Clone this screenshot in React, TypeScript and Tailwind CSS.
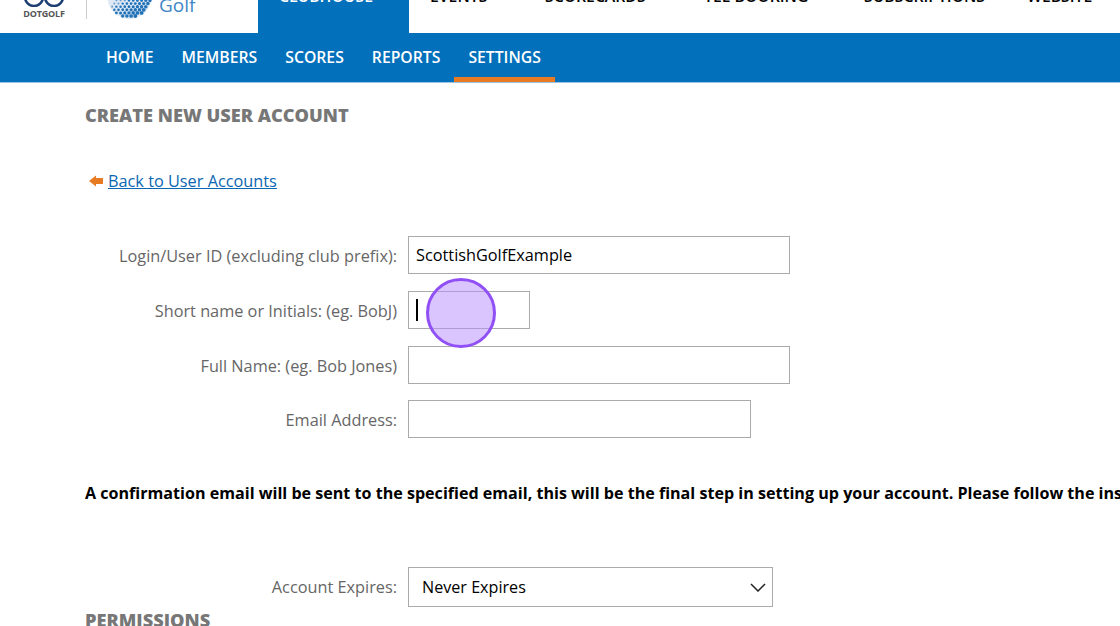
const TOP_LINKS = [
  { label: 'EVENTS', width: 'w-[115px]' },
  { label: 'SCORECARDS', width: 'w-[159px]' },
  { label: 'TEE BOOKING', width: 'w-[160px]' },
  { label: 'SUBSCRIPTIONS', width: 'w-[163px]' },
  { label: 'WEBSITE', width: 'w-[70px]' },
];

const SUB_LINKS = ['HOME', 'MEMBERS', 'SCORES', 'REPORTS', 'SETTINGS'];

function DotGolfLogo() {
  return (
    <div className="flex w-[44px] flex-col items-center">
      <svg width="44" height="7" viewBox="0 0 44 7" fill="none" stroke="#1d3f73" strokeWidth="2.6">
        <circle cx="12" cy="-3" r="9" />
        <circle cx="32" cy="-3" r="9" />
      </svg>
      <span className="mt-[2px] text-[9px] leading-[10px] font-bold tracking-[-0.2px] text-[#555]">DOTGOLF</span>
    </div>
  );
}

function GolfBall() {
  const dots: { x: number; y: number; r: number; o: number }[] = [];
  for (let row = 0; row < 7; row++) {
    for (let col = 0; col < 11; col++) {
      const x = 1 + col * 4.2 + (row % 2) * 2.1;
      const y = 0.5 + row * 3.1;
      const inBall = (x - 22.5) ** 2 + (y + 3) ** 2 < 21 * 21;
      if (!inBall) continue;
      const weight = (x + y * 1.8) / 50;
      if (weight < 0.2) continue;
      dots.push({ x, y, r: 0.7 + weight * 1.1, o: weight < 0.4 ? 0.6 : 1 });
    }
  }
  return (
    <svg width="46" height="20" viewBox="0 0 46 20" className="shrink-0">
      <circle cx="22.5" cy="-3" r="22" fill="#dfe9f5" />
      {dots.map((d) => (
        <circle key={`${d.x}-${d.y}`} cx={d.x} cy={d.y} r={d.r} fill="#2272b8" opacity={d.o} />
      ))}
    </svg>
  );
}

function FormRow({ label, inputWidth, value, cursor }: { label: string; inputWidth: string; value?: string; cursor?: boolean }) {
  return (
    <div className="flex items-center">
      <label className="w-[323px] pt-[2px] pr-[11px] text-right text-[16.3px] text-[#666]">{label}</label>
      <div className={`flex h-[38px] items-center border border-[#aaa] px-[7px] text-[16.3px] text-black ${inputWidth}`}>
        {value}
        {cursor && <span className="h-[22px] w-[2px] bg-black" />}
      </div>
    </div>
  );
}

export default function App() {
  return (
    <div
      className="relative h-[626px] w-[1120px] overflow-hidden bg-white"
      style={{ fontFamily: '"Open Sans", "Noto Sans", sans-serif' }}
    >
      <header className="flex h-[33px] overflow-hidden">
        <div className="flex w-[258px] pl-[22px]">
          <DotGolfLogo />
          <div className="ml-[20px] h-[19px] w-px bg-[#ccc]" />
          <div className="ml-[20px]">
            <GolfBall />
          </div>
          <span className="mt-[-8px] ml-[6px] text-[19px] leading-[26px] text-[#3f86c6]">Golf</span>
        </div>
        <div className="w-[151px] bg-[#0270bb] pl-[21px] text-[15.75px] leading-[22px] font-semibold text-white">
          <div className="mt-[-15px]">CLUBHOUSE</div>
        </div>
        <nav className="flex pl-[21px]">
          {TOP_LINKS.map((link) => (
            <span key={link.label} className={`mt-[-15px] text-[15.75px] leading-[22px] font-semibold text-black ${link.width}`}>
              {link.label}
            </span>
          ))}
        </nav>
      </header>

      <nav className="flex h-[50px] items-stretch border-b border-[#9cc4e2] bg-[#0270bb] pl-[92px]">
        {SUB_LINKS.map((link) => (
          <span
            key={link}
            className={`flex items-center border-b-[5px] px-[14px] pt-[5px] text-[15.75px] font-semibold text-white ${
              link === 'SETTINGS' ? 'w-[101px] border-[#e87b22]' : 'border-transparent'
            }`}
          >
            {link}
          </span>
        ))}
      </nav>

      <main className="pl-[85px]">
        <h1 className="pt-[20px] text-[18.2px] leading-[25px] font-extrabold text-[#777]">CREATE NEW USER ACCOUNT</h1>

        <div className="mt-[41px] flex items-center pl-[4px]">
          <svg width="14" height="12" viewBox="0 0 14 12" className="mr-[5px]">
            <path d="M0 6 L7 0.5 V3 H14 V9 H7 V11.5 Z" fill="#e87b22" />
          </svg>
          <a href="#" className="text-[16.3px] leading-[24px] text-[#0b67b2] underline">
            Back to User Accounts
          </a>
        </div>

        <div className="mt-[43px] flex flex-col">
          <FormRow label="Login/User ID (excluding club prefix):" inputWidth="w-[382px]" value="ScottishGolfExample" />
          <div className="mt-[17px]">
            <FormRow label="Short name or Initials: (eg. BobJ)" inputWidth="w-[122px]" cursor />
          </div>
          <div className="mt-[17px]">
            <FormRow label="Full Name: (eg. Bob Jones)" inputWidth="w-[382px]" />
          </div>
          <div className="mt-[16px]">
            <FormRow label="Email Address:" inputWidth="w-[343px]" />
          </div>
        </div>

        <p className="mt-[43px] text-[16.1px] leading-[24px] font-bold whitespace-nowrap text-black">
          A confirmation email will be sent to the specified email, this will be the final step in setting up your account. Please follow the instructions in the email.
        </p>

        <div className="mt-[62px] flex items-center">
          <label className="w-[323px] pr-[11px] text-right text-[16.3px] text-[#666]">Account Expires:</label>
          <div className="flex h-[40px] w-[365px] items-center justify-between border border-[#aaa] pr-[6px] pl-[13px] text-[16.15px] text-black">
            Never Expires
            <svg width="16" height="9" viewBox="0 0 16 9" fill="none" stroke="#222" strokeWidth="1.5">
              <path d="M1 1 L8 8 L15 1" />
            </svg>
          </div>
        </div>

        <h2 className="mt-[1px] text-[18.2px] leading-[25px] font-extrabold text-[#777]">PERMISSIONS</h2>
      </main>

      <div className="absolute top-[278px] left-[426px] h-[70px] w-[70px] rounded-full border-[3px] border-[#9050f5] bg-[#b78cff]/50" />
    </div>
  );
}
